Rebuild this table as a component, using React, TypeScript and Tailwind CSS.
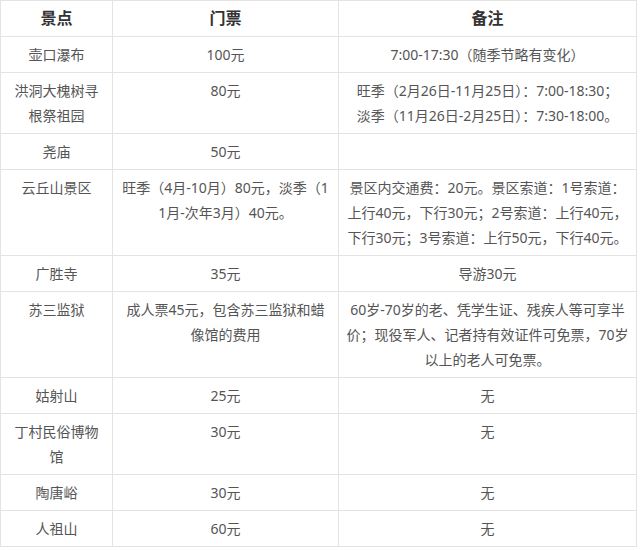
type Row = {
  name: string[];
  ticket: string[];
  note: string[];
};

const rows: Row[] = [
  { name: ['壶口瀑布'], ticket: ['100元'], note: ['7:00-17:30（随季节略有变化）'] },
  {
    name: ['洪洞大槐树寻', '根祭祖园'],
    ticket: ['80元'],
    note: ['旺季（2月26日-11月25日）：7:00-18:30；', '淡季（11月26日-2月25日）：7:30-18:00。'],
  },
  { name: ['尧庙'], ticket: ['50元'], note: [] },
  {
    name: ['云丘山景区'],
    ticket: ['旺季（4月-10月）80元，淡季（1', '1月-次年3月）40元。'],
    note: [
      '景区内交通费：20元。景区索道：1号索道：',
      '上行40元，下行30元；2号索道：上行40元，',
      '下行30元；3号索道：上行50元，下行40元。',
    ],
  },
  { name: ['广胜寺'], ticket: ['35元'], note: ['导游30元'] },
  {
    name: ['苏三监狱'],
    ticket: ['成人票45元，包含苏三监狱和蜡', '像馆的费用'],
    note: [
      '60岁-70岁的老、凭学生证、残疾人等可享半',
      '价；现役军人、记者持有效证件可免票，70岁',
      '以上的老人可免票。',
    ],
  },
  { name: ['姑射山'], ticket: ['25元'], note: ['无'] },
  { name: ['丁村民俗博物', '馆'], ticket: ['30元'], note: ['无'] },
  { name: ['陶唐峪'], ticket: ['30元'], note: ['无'] },
  { name: ['人祖山'], ticket: ['60元'], note: ['无'] },
];

function Lines({ lines }: { lines: string[] }) {
  return (
    <>
      {lines.map((line, i) => (
        <div key={i} className="whitespace-nowrap">
          {line}
        </div>
      ))}
    </>
  );
}

export default function App() {
  const cell = 'border border-[#e3e3e3] px-1 pt-[5px] pb-[5px] text-center align-top';

  return (
    <div
      className="w-[640px] h-[550px] bg-white"
      style={{ fontFamily: '"Noto Sans", "Noto Sans CJK SC", sans-serif' }}
    >
      <table className="table-fixed border-collapse w-[636px] text-[14px] leading-[25px] text-[#555]">
        <colgroup>
          <col className="w-[112px]" />
          <col className="w-[226px]" />
          <col className="w-[298px]" />
        </colgroup>
        <thead>
          <tr className="text-[16px] font-bold text-[#333]">
            <th className={cell}>景点</th>
            <th className={cell}>门票</th>
            <th className={cell}>备注</th>
          </tr>
        </thead>
        <tbody>
          {rows.map(row => (
            <tr key={row.name.join('')}>
              <td className={cell}>
                <Lines lines={row.name} />
              </td>
              <td className={cell}>
                <Lines lines={row.ticket} />
              </td>
              <td className={cell}>
                <Lines lines={row.note} />
              </td>
            </tr>
          ))}
        </tbody>
      </table>
    </div>
  );
}
